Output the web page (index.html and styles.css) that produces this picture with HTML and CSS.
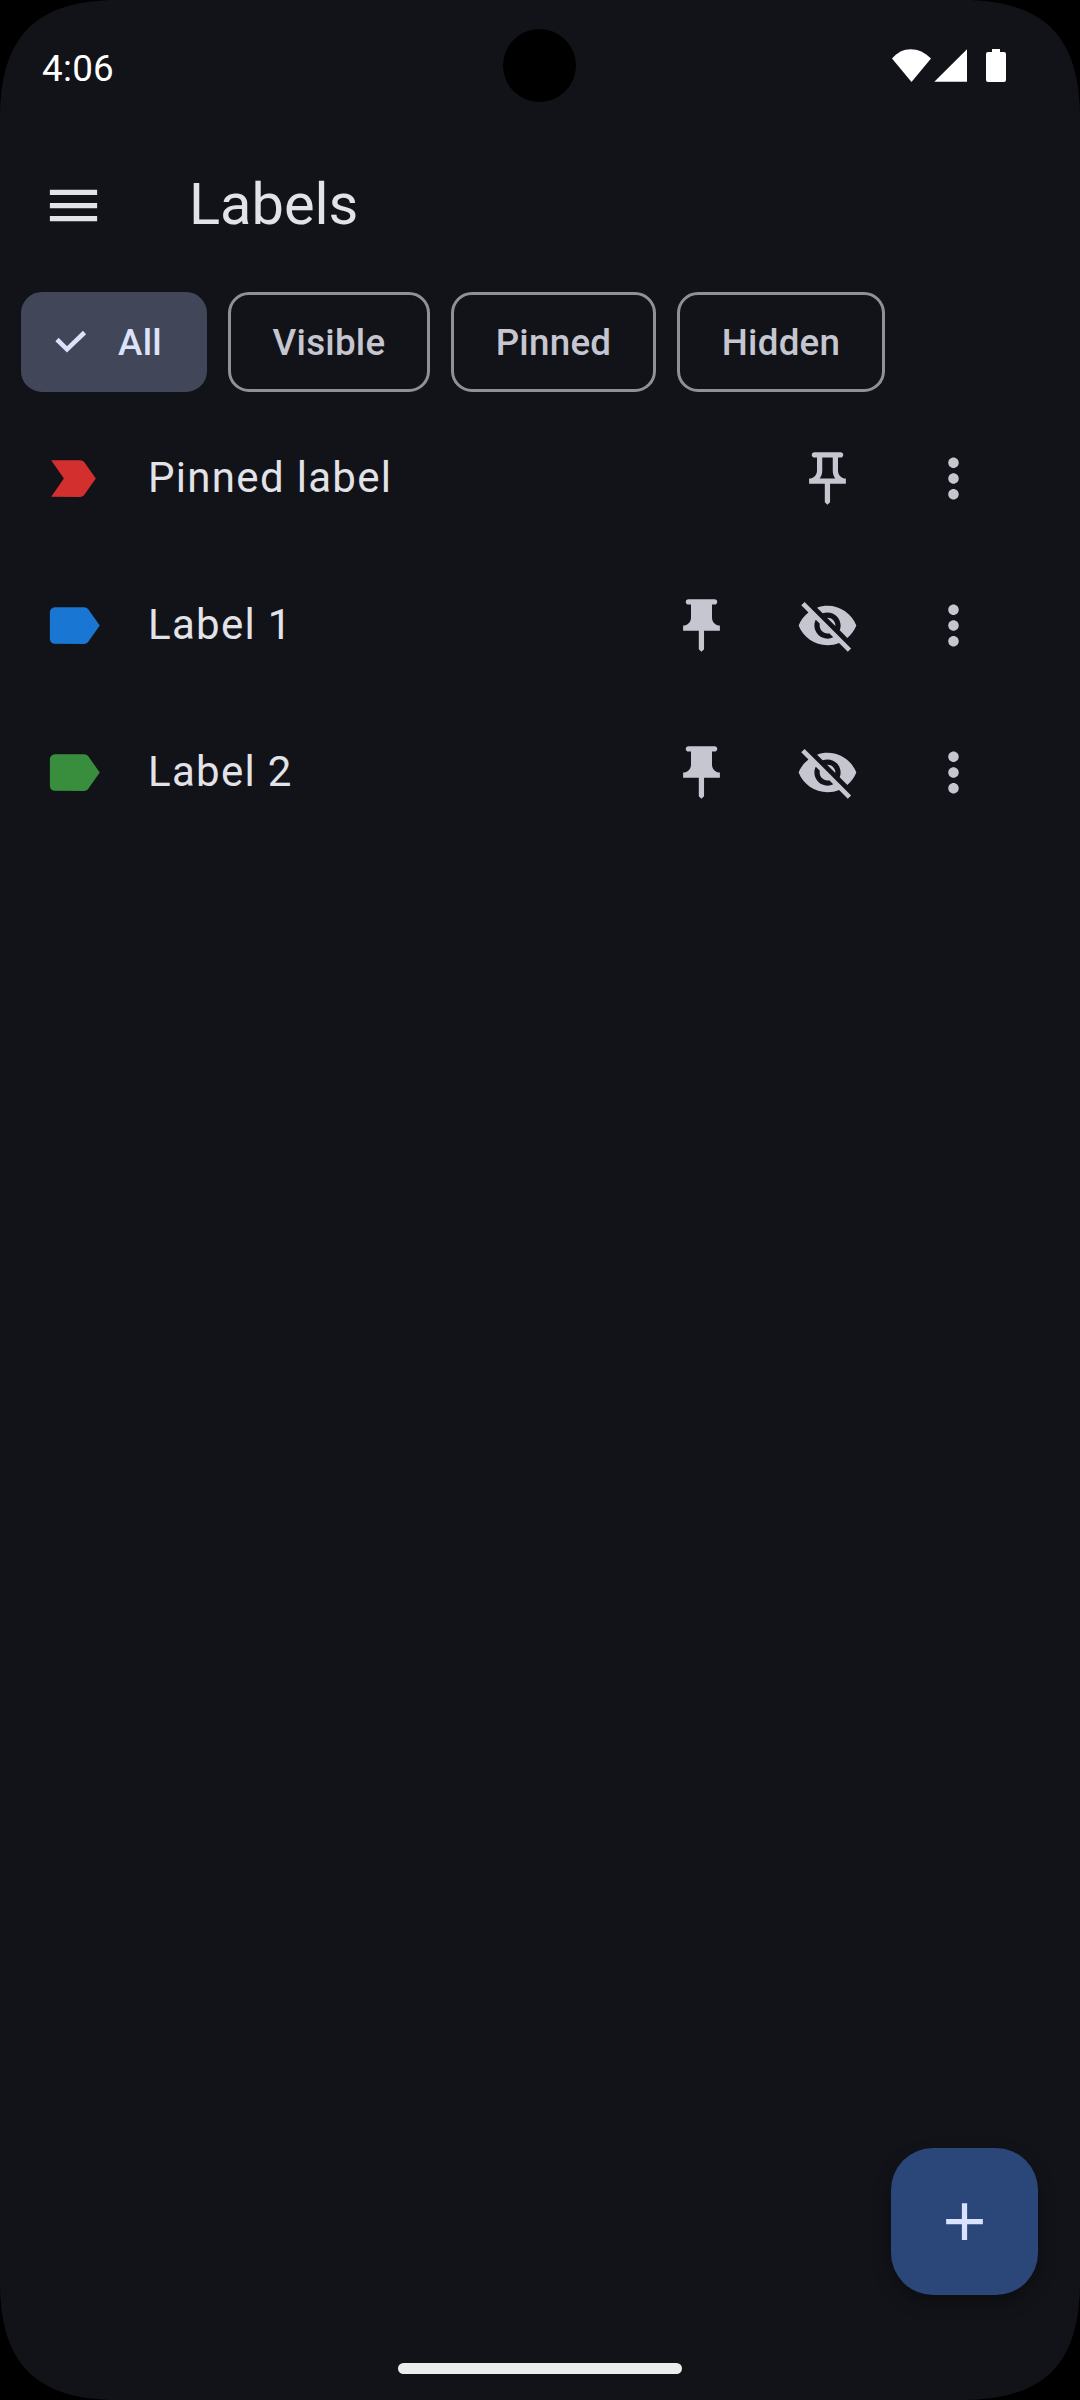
FILE: index.html
```html
<!DOCTYPE html>
<html lang="en">
<head>
<meta charset="utf-8">
<title>Labels</title>
<link rel="stylesheet" href="styles.css">
</head>
<body>
<svg class="defs" width="0" height="0" aria-hidden="true">
  <symbol id="pin" viewBox="0 0 24 24"><path d="M16 9V4h1c.55 0 1-.45 1-1s-.45-1-1-1H7c-.55 0-1 .45-1 1s.45 1 1 1h1v5c0 1.66-1.34 3-3 3v2h5.97v7l1 1 1-1v-7H19v-2c-1.66 0-3-1.34-3-3z"/></symbol>
  <symbol id="pin-outline" viewBox="0 0 24 24"><path d="M14 4v5c0 1.12.37 2.16 1 3H9c.65-.86 1-1.9 1-3V4h4m3-2H7c-.55 0-1 .45-1 1s.45 1 1 1h1v5c0 1.66-1.34 3-3 3v2h5.97v7l1 1 1-1v-7H19v-2c-1.66 0-3-1.34-3-3V4h1c.55 0 1-.45 1-1s-.45-1-1-1z"/></symbol>
  <symbol id="more" viewBox="0 0 24 24"><path d="M12 8c1.1 0 2-.9 2-2s-.9-2-2-2-2 .9-2 2 .9 2 2 2zm0 2c-1.1 0-2 .9-2 2s.9 2 2 2 2-.9 2-2-.9-2-2-2zm0 6c-1.1 0-2 .9-2 2s.9 2 2 2 2-.9 2-2-.9-2-2-2z"/></symbol>
  <symbol id="label" viewBox="0 0 24 24"><path d="M17.63 5.84C17.27 5.33 16.67 5 16 5L5 5.01C3.9 5.01 3 5.9 3 7v10c0 1.1.9 1.99 2 1.99L16 19c.67 0 1.27-.33 1.63-.84L22 12l-4.37-6.16z"/></symbol>
  <symbol id="label-important" viewBox="0 0 24 24"><path d="M3.5 18.99l11 .01c.67 0 1.27-.33 1.63-.84L20.5 12l-4.37-6.16c-.36-.51-.96-.84-1.63-.84l-11 .01L8.34 12 3.5 18.99z"/></symbol>
  <symbol id="eye-off" viewBox="0 0 24 24"><path d="M12 7c2.76 0 5 2.24 5 5 0 .65-.13 1.26-.36 1.83l2.920 2.920c1.510-1.260 2.700-2.890 3.430-4.750-1.730-4.390-6-7.500-11-7.500-1.400 0-2.740.25-3.980.7l2.160 2.160C10.740 7.130 11.350 7 12 7zM2 4.270l2.280 2.280.46.46C3.080 8.300 1.780 10.020 1 12c1.730 4.390 6 7.500 11 7.500 1.550 0 3.030-.3 4.380-.84l.42.42L19.730 22 21 20.730 3.270 3 2 4.270zM7.530 9.800l1.550 1.550c-.05.21-.08.43-.08.65 0 1.660 1.340 3 3 3 .22 0 .44-.03.65-.08l1.550 1.550c-.67.33-1.410.53-2.200.53-2.760 0-5-2.240-5-5 0-.79.2-1.530.53-2.200zm4.310-.78l3.150 3.150.02-.16c0-1.660-1.340-3-3-3l-.17.01z"/></symbol>
</svg>
<div class="screen">
  <header class="status">
    <span class="clock">4:06</span>
    <span class="camera"></span>
    <svg class="status-icons" width="116" height="34" viewBox="0 0 116 34"><path d="M2 9.500C12-3 29-3 41 9.500L21.500 33z"/><path d="M44.300 32.700L77 0.300V32.700z"/><path d="M102 0h8v3h4q2 0 2 2v26q0 2-2 2h-16q-2 0-2-2V5q0-2 2-2h4z"/></svg>
  </header>
  <div class="appbar">
    <svg class="icon" viewBox="0 0 24 24"><path d="M3 18h18v-2H3v2zm0-5h18v-2H3v2zm0-7v2h18V6H3z"/></svg>
    <h1 class="title">Labels</h1>
  </div>
  <nav class="chips">
    <span class="chip chip-all"><svg class="check" viewBox="0 0 42 42"><path d="M7 18.500L17 28.300L34.500 11.500"/></svg>All</span>
    <span class="chip chip-visible">Visible</span>
    <span class="chip chip-pinned">Pinned</span>
    <span class="chip chip-hidden">Hidden</span>
  </nav>
  <main class="list">
    <div class="row">
      <svg class="icon red"><use href="#label-important"/></svg>
      <span class="name">Pinned label</span>
      <svg class="icon"><use href="#pin-outline"/></svg>
      <svg class="icon"><use href="#more"/></svg>
    </div>
    <div class="row">
      <svg class="icon blue"><use href="#label"/></svg>
      <span class="name">Label 1</span>
      <svg class="icon"><use href="#pin"/></svg>
      <svg class="icon"><use href="#eye-off"/></svg>
      <svg class="icon"><use href="#more"/></svg>
    </div>
    <div class="row">
      <svg class="icon green"><use href="#label"/></svg>
      <span class="name">Label 2</span>
      <svg class="icon"><use href="#pin"/></svg>
      <svg class="icon"><use href="#eye-off"/></svg>
      <svg class="icon"><use href="#more"/></svg>
    </div>
  </main>
  <footer class="bottom">
    <button class="fab" aria-label="Add label"><svg class="icon" viewBox="0 0 24 24"><path d="M19 13h-6v6h-2v-6H5v-2h6V5h2v6h6z"/></svg></button>
    <span class="handle"></span>
  </footer>
</div>
</body>
</html>
```
FILE: styles.css
```css
* { box-sizing: border-box; }
body { margin: 0; background: #000; font-family: Roboto, sans-serif; }
.defs { position: absolute; }
.screen {
  width: 1080px; height: 2400px;
  display: flex; flex-direction: column;
  background: #121318; color: #e2e2e9;
  clip-path: path("M0 118C0 36 36 0 118 0H962C1044 0 1080 36 1080 118V2282C1080 2364 1044 2400 962 2400H118C36 2400 0 2364 0 2282Z");
}
.icon { width: 63px; height: 63px; flex: none; fill: currentColor; display: block; }
.status {
  height: 136px; position: relative; flex: none;
  display: flex; justify-content: space-between;
  padding: 0 74px 0 42px; color: #fff;
}
.clock { font-size: 36.75px; line-height: 43px; margin-top: 47px; letter-spacing: 0.3px; }
.camera {
  position: absolute; left: 503px; top: 29px;
  width: 73px; height: 73px; border-radius: 50%; background: #000;
}
.status-icons { margin-top: 49px; fill: #fff; }
.appbar { height: 139px; flex: none; display: flex; align-items: center; padding-left: 42px; gap: 84px; }
.title { margin: 0; padding-bottom: 4px; font-size: 57.75px; font-weight: 400; line-height: 74px; }
.chips { height: 134px; flex: none; display: flex; align-items: flex-start; gap: 21px; padding: 17px 21px 0; }
.chip {
  height: 100px; border: 3px solid #8f9099; border-radius: 21px;
  display: flex; align-items: center; justify-content: center;
  font-size: 36.75px; font-weight: 500; letter-spacing: 0.26px; color: #c5c6d0;
}
.chip-all { width: 186px; background: #414659; border-color: #414659; color: #dbe2f9; justify-content: flex-start; padding-left: 26px; gap: 26px; }
.chip-visible { width: 202px; }
.chip-pinned { width: 205px; }
.chip-hidden { width: 208px; }
.check { width: 42px; height: 42px; fill: none; stroke: currentColor; stroke-width: 4.6; }
.list { flex: 1; padding: 0 95px 0 42px; color: #c5c6d0; margin-top: -4px; }
.row { height: 147px; display: flex; align-items: center; gap: 63px; }
.name { flex: 1; margin-left: -20px; padding-bottom: 2px; color: #e2e2e9; font-size: 42px; line-height: 63px; letter-spacing: 1.31px; }
.red { color: #d32f2f; }
.blue { color: #1976d2; }
.green { color: #388e3c; }
.bottom { height: 252px; flex: none; display: flex; flex-direction: column; }
.fab {
  width: 147px; height: 147px; margin: 0 42px 0 auto; padding: 0; flex: none;
  display: flex; align-items: center; justify-content: center;
  border: 0; border-radius: 42px; background: #2b4678; color: #d9e2ff;
  box-shadow: 0 8px 18px rgba(0,0,0,.3);
}
.handle { width: 284px; height: 11px; margin: 68px auto 0; border-radius: 6px; background: #ececec; }
```
